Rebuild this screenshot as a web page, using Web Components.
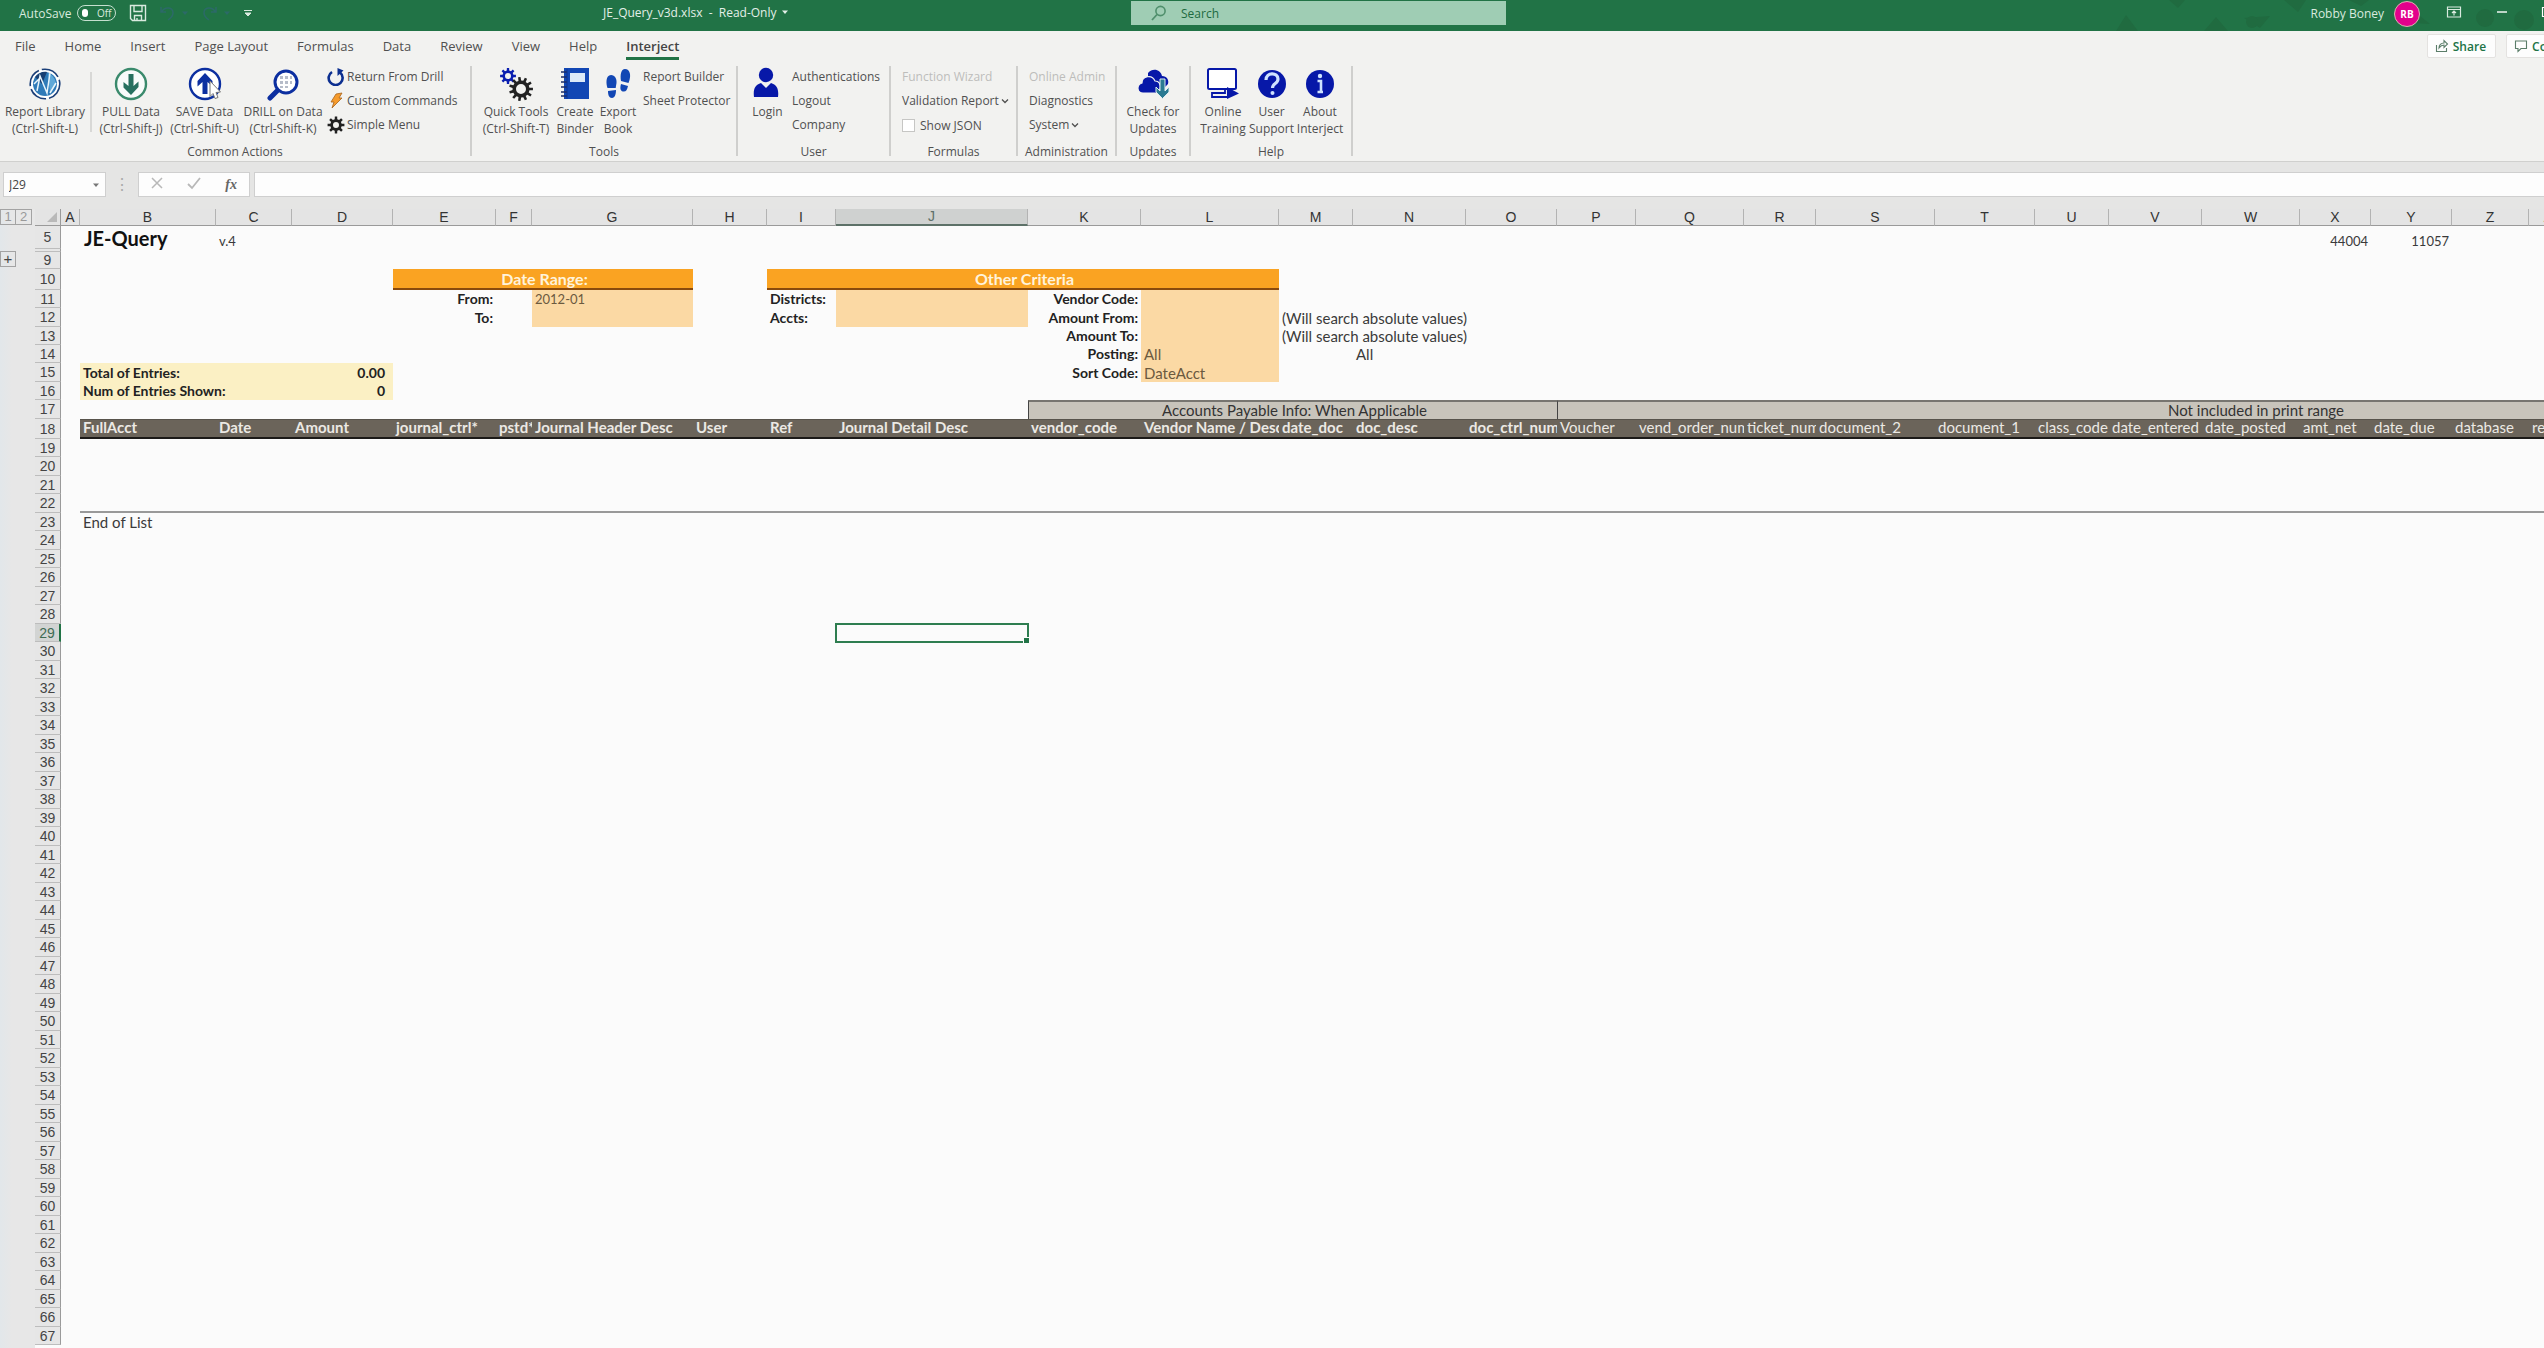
<!DOCTYPE html>
<html lang="en">
<head>
<meta charset="utf-8">
<title>JE_Query_v3d.xlsx - Read-Only</title>
<style>
  :root {
    --ui: "Open Sans", "Noto Sans", sans-serif;
    --head: "Liberation Sans", Arial, sans-serif;
    --cell: Lato, "Open Sans", sans-serif;
    --green: #217346;
    --ink: #505050;
  }
  html, body { margin: 0; height: 100%; overflow: hidden; background: #fbfbfb; }
  body { font-family: var(--ui); font-size: 12px; color: var(--ink); }
</style>
</head>
<body>
<workbook-app></workbook-app>
<script>
/* Outline of a gear wheel: n teeth between the outer and the inner radius, with a round hole. */
function gear(cx, cy, ro, ri, hole, n) {
  let d = '';
  const step = Math.PI * 2 / n;
  for (let i = 0; i < n; i++) {
    [[ri, -.28], [ro, -.18], [ro, .18], [ri, .28]].forEach(([r, k], j) => {
      const a = (i + k) * step;
      d += (i + j ? 'L' : 'M') + (cx + r * Math.cos(a)).toFixed(2) + ' ' + (cy + r * Math.sin(a)).toFixed(2);
    });
  }
  return d + `ZM${cx - hole} ${cy}a${hole} ${hole} 0 1 0 ${hole * 2} 0a${hole} ${hole} 0 1 0 ${-hole * 2} 0Z`;
}

const ICONS = {
  library: [34, `<circle cx="17" cy="17" r="14.8" fill="#fff" stroke="#1b3f78" stroke-width="1.6" stroke-dasharray="19 3"/><circle cx="17" cy="17" r="12" fill="#2f7ab8"/><path d="M7 10c3-4 8-6 12-5l-5 12z" fill="#173f73"/><path d="M20 6c5 2 8 7 8 12l-6 8z" fill="#5fa8d8"/><path d="M9 24l3-15 7 17 3-20M6 17l6-6M22 26l6-10" fill="none" stroke="#e8f4fb" stroke-width="1.5"/>`],
  pull: [34, `<circle cx="17" cy="17" r="15" fill="#f8fbfa" stroke="#3a8a6c" stroke-width="2.4"/><path d="M14.5 7h5v12l5-4.500v5.500L17 28l-7.500-7.500V15l5 4z" fill="#27705f"/>`],
  save: [34, `<circle cx="17" cy="17" r="15" fill="#fff" stroke="#0c2fa0" stroke-width="2.400"/><path d="M14.500 27h5V15l5 4.500V14L17 6l-7.500 8v5.500l5-4.500z" fill="#0c2fa0"/><path d="M22 14l10.500 11-4.500.5 2 5-3 1-2-5-3 3z" fill="#fff" stroke="#777" stroke-width="1"/>`],
  drill: [34, `<path d="M4 31l11-11" stroke="#0c2fa0" stroke-width="5" stroke-linecap="round"/><circle cx="20" cy="15" r="11" fill="#fff" stroke="#0c2fa0" stroke-width="3"/><path d="M14 9h3v3h-3zM19 9h3v3h-3zM24 9h2v3h-2zM14 14h3v3h-3zM19 14h3v3h-3zM24 14h2v3h-2zM14 19h3v2h-3zM19 19h3v2h-3z" fill="#b6bcc9"/>`],
  quick: [34, `<path fill-rule="evenodd" d="${gear(9, 9, 8, 5.6, 3, 8)}" fill="#0a1eb0"/><path fill-rule="evenodd" d="${gear(22, 22, 12, 8.5, 5, 11)}" fill="#222"/>`],
  binder: [34, `<path d="M6 1h25v31H6z" fill="#1247b4"/><path d="M12 6h15v9H12z" fill="#dceaf8"/><path d="M3 5h6M3 10h6M3 15h6M3 20h6M3 25h6M3 29h6" stroke="#1b2c66" stroke-width="1.500"/><path d="M9 2v30" stroke="#0d3590" stroke-width="1"/>`],
  steps: [34, `<path d="M10 8c4 0 6 4 5.500 8-.3 2-.5 3-.8 5H6.500C5 17 4.500 8 10 8zM7 24l8-1c0 4-1 8-4 8s-4-3-4-7zM24 2c5 0 6 6 4.500 11l-1 3-7.500-2c-1-6 0-12 4-12zM20 17l7 2c-1 4-2 6-5 5.500s-3-4-2-7.500z" fill="#1247b4"/>`],
  login: [34, `<circle cx="15" cy="8" r="7.200" fill="#0718a8"/><path d="M3 30c-1-8 1-12 7-14l5 5 5-5c6 2 8 6 7 14z" fill="#0718a8"/>`],
  cloud: [34, `<path d="M12 6c5-6 13-3 14 3 5 0 7 4 6 8l-3 3H12z" fill="#0718a8"/><path d="M7 26c-6 0-7-8-1-10 0-7 10-9 13-2 4 0 6 3 5 8l-2 4z" fill="#0718a8" stroke="#f1f1ef" stroke-width="1.200"/><path d="M24 12h5v12l4-4v5l-6.500 6.500L20 25v-5l4 4z" fill="#2a7a92" stroke="#dcebf0" stroke-width="1"/>`],
  training: [34, `<rect x="2" y="2" width="28" height="20" rx="1.500" fill="#fff" stroke="#0718a8" stroke-width="2"/><path d="M13 22h6v4H6v4h16" fill="none" stroke="#0718a8" stroke-width="1.800"/><path d="M21 20l12 6.500L21 32z" fill="#0718a8"/>`],
  support: [34, `<circle cx="17" cy="17" r="14" fill="#0718a8"/><path d="M11 13c0-8 12-8 12-1 0 5-5.500 4-5.500 9" fill="none" stroke="#cfe2ff" stroke-width="3.200"/><circle cx="17.500" cy="26" r="2" fill="#cfe2ff"/>`],
  about: [34, `<circle cx="17" cy="17" r="14" fill="#0718a8"/><circle cx="17" cy="9" r="2.200" fill="#cfe2ff"/><path d="M14.500 14h3.500v11h2M14.500 25h4" fill="none" stroke="#cfe2ff" stroke-width="2.600"/>`],
  undoDrill: [18, `<path d="M5 4A7 7 0 1 0 13 4.500" fill="none" stroke="#0c2f90" stroke-width="2.600"/><path d="M10.500 0v8l6-5.500z" fill="#0c2f90"/>`],
  bolt: [18, `<path d="M9 2l6-1-3 5h3L5 16l2-6H4z" fill="#f59b2c" stroke="#a8631a" stroke-width=".8"/>`],
  cog: [18, `<path fill-rule="evenodd" d="${gear(9, 9, 8.500, 5.800, 3, 8)}" fill="#222"/>`],
  chevron: [8, `<path d="M1 2.500l3 3 3-3" fill="none" stroke="#505050" stroke-width="1.300"/>`],
  disk: [18, `<path d="M1.500 1.500h15v15h-13l-2-2zM5 1.500v6h8v-6M5.500 16.500v-5h7v5M8 14v2" fill="none" stroke="#d9eadf" stroke-width="1.400"/>`],
  undo: [18, `<path d="M2 3v5h5M2.500 8C6 2 14 3 14 9c0 3-2 5-5 7" fill="none" stroke="#2c6a68" stroke-width="1.500"/>`],
  redo: [18, `<path d="M15 3v5h-5M14.500 8C11 2 3 3 3 9c0 3 2 5 5 7" fill="none" stroke="#2c6a68" stroke-width="1.500"/>`],
  more: [10, `<path d="M1 2.500h8M2 5l3 3 3-3z" fill="#d9eadf" stroke="#d9eadf" stroke-width="1"/>`],
  down: [8, `<path d="M1 2.500h6L4 6z" fill="currentColor"/>`],
  lens: [16, `<circle cx="9.500" cy="6" r="4.600" fill="none" stroke="#4f8f6c" stroke-width="1.600"/><path d="M6 9.500L1 15" stroke="#4f8f6c" stroke-width="1.800"/>`],
  panel: [16, `<path d="M1.500 3h13v10h-13zM1.500 5.500h13M8 11.500V7M6 9l2-2 2 2" fill="none" stroke="#d9eadf" stroke-width="1.200"/>`],
  minus: [12, `<path d="M1 6h10" stroke="#fff" stroke-width="1.400"/>`],
  box: [12, `<path d="M1.500 1.500h9v9h-9z" fill="none" stroke="#fff" stroke-width="1.200"/>`],
  share: [14, `<path d="M1.500 6v6.500h10V9M4 9c0-3 2-5 5-5V1.500L12.500 5 9 8.500V6C7 6 5.500 7 4 9z" fill="none" stroke="#5b7d69" stroke-width="1.100"/>`],
  comment: [14, `<path d="M1.500 2h11v7.500H7L4 12.500v-3H1.500z" fill="none" stroke="#5b7d69" stroke-width="1.100"/>`],
  cross: [12, `<path d="M1 1l10 10M11 1L1 11" stroke="#b8b8b8" stroke-width="1.500"/>`],
  tick: [14, `<path d="M1 8l4 4 8-10" fill="none" stroke="#b8b8b8" stroke-width="1.800"/>`],
  corner: [10, `<path d="M10 0v10H0z" fill="#b9b9b9"/>`],
};

class BaseElement extends HTMLElement {
  connectedCallback() {
    if (this.shadowRoot) return;
    this.attachShadow({ mode: 'open' }).innerHTML = `<style>
      *{box-sizing:border-box}
      button{font:inherit;color:inherit;background:none;border:0;padding:0;margin:0;cursor:pointer}
      ${this.css()}</style>${this.html()}`;
  }
  css() { return ''; }
  html() { return '<slot></slot>'; }
}

class AppIcon extends BaseElement {
  css() { return ':host{display:inline-flex;flex:none} svg{display:block}'; }
  html() {
    const [s, body] = ICONS[this.getAttribute('name')];
    return `<svg width="${s}" height="${s}" viewBox="0 0 ${s} ${s}" aria-hidden="true">${body}</svg>`;
  }
}

class TitleBar extends BaseElement {
  css() { return `
    :host{display:flex;position:relative;height:31px;background:var(--green);color:#d9eadf;overflow:hidden;font-size:12px}
    .decor{position:absolute;right:0;top:0}
    .quick{flex:none;display:flex;align-items:center;width:603px;height:26px;padding-left:19px}
    .auto{display:flex;align-items:center;gap:6px;margin-right:13px;font-size:12px;white-space:nowrap}
    .sw{display:flex;align-items:center;gap:9px;width:39px;height:16px;padding:0 4px;border:1px solid #c5dfcf;border-radius:8px;font-size:10px;line-height:14px}
    .sw i{width:8px;height:8px;border-radius:4px;background:#fff}
    .quick button{display:flex;align-items:center}
    .u{margin-left:12px;gap:4px;color:#2c6a68}
    .m{margin-left:12px}
    .file{flex:none;width:528px;height:24px;display:flex;align-items:center;gap:4px;color:#e3efe8}
    .find{flex:none;display:flex;align-items:center;gap:14px;width:375px;height:24px;margin-top:1px;padding-left:20px;background:#9fcdb4}
    .find input{flex:1;min-width:0;border:0;background:none;outline:0;padding:0;font:12px var(--ui);color:#1d6a40}
    .find input::placeholder{color:#1d6a40;opacity:1}
    .right{position:relative;margin-left:auto;display:flex;align-items:center;height:27px;white-space:nowrap}
    .who{margin-right:10px}
    .av{display:grid;place-items:center;width:26px;height:26px;margin-right:26px;border-radius:13px;background:#e3008c;border:1px solid #d9b6b0;color:#fff;font-size:10px;font-weight:700}
    .p{margin-right:34px}.n{margin-right:33px}.b{margin-right:-9px}`; }
  html() { return `
    <svg class="decor" width="480" height="31" viewBox="-80 0 480 31" aria-hidden="true"><g fill="#206b40"><path d="M25 0h16l-7 8zM-28 31l10-16 12 16zM60 31l12-14 12 14zM100 18l26-2-10 12zM140 0h22l-8 12zM250 22l26-6 10 8zM205 0h20l-8 6z"/><circle cx="341" cy="18" r="9"/><circle cx="380" cy="20" r="10"/><circle cx="108" cy="22" r="6"/></g></svg>
    <div class="quick">
      <label class="auto"><span>AutoSave</span><span class="sw"><i></i>Off</span></label>
      <button aria-label="Save"><app-icon name="disk"></app-icon></button>
      <button class="u" aria-label="Undo"><app-icon name="undo"></app-icon><app-icon name="down"></app-icon></button>
      <button class="u" aria-label="Redo"><app-icon name="redo"></app-icon><app-icon name="down"></app-icon></button>
      <button class="m" aria-label="Customize"><app-icon name="more"></app-icon></button>
    </div>
    <div class="file"><span>JE_Query_v3d.xlsx&nbsp; -&nbsp; Read-Only</span><app-icon name="down"></app-icon></div>
    <label class="find"><app-icon name="lens"></app-icon><input type="search" placeholder="Search" aria-label="Search"></label>
    <div class="right"><span class="who">Robby Boney</span><span class="av">RB</span>
      <button class="p" aria-label="Ribbon display options"><app-icon name="panel"></app-icon></button>
      <button class="n" aria-label="Minimize"><app-icon name="minus"></app-icon></button>
      <button class="b" aria-label="Restore"><app-icon name="box"></app-icon></button></div>`; }
}

class RibbonTabs extends BaseElement {
  css() { return `
    :host{display:flex;align-items:flex-start;height:35px;padding-left:15px;font-size:13px;overflow:hidden}
    nav{display:flex;gap:29px}
    nav button{height:29px;line-height:30px;border-bottom:3px solid transparent;white-space:nowrap}
    nav .on{border-color:var(--green);font-weight:600;color:#444}
    .act{display:flex;gap:10px;margin:3px -61px 0 auto}
    .act button{display:flex;align-items:center;gap:4px;height:24px;padding:0 9px 0 7px;background:#fdfdfd;border:1px solid #e4e2e0;border-radius:2px;color:var(--green);font-weight:600;font-size:12px}`; }
  html() {
    const tabs = ['File', 'Home', 'Insert', 'Page Layout', 'Formulas', 'Data', 'Review', 'View', 'Help', 'Interject'];
    return `<nav>${tabs.map(t => `<button${t === 'Interject' ? ' class="on"' : ''}>${t}</button>`).join('')}</nav>
      <div class="act"><button><app-icon name="share"></app-icon>Share</button><button><app-icon name="comment"></app-icon>Comments</button></div>`;
  }
}

class RibbonGroup extends BaseElement {
  css() { return `
    :host{display:flex;flex-direction:column;flex:none;width:var(--w);height:90px;border-right:2px solid #cfcfcd}
    .row{display:flex;flex:none;height:76px;padding-left:var(--pad,0)}
    .name{flex:none;height:20px;line-height:20px;text-align:center;font-size:12px}`; }
  html() { return `<div class="row"><slot></slot></div><div class="name">${this.getAttribute('label')}</div>`; }
}

class BigButton extends BaseElement {
  css() { return `
    :host{display:block;flex:none;width:var(--w)}
    button{display:flex;flex-direction:column;align-items:center;width:100%;padding-top:1px;line-height:17px;text-align:center;white-space:nowrap}
    .t{display:block;padding-top:2px}`; }
  html() { return `<button><app-icon name="${this.getAttribute('icon')}"></app-icon><span class="t"><slot></slot></span></button>`; }
}

class ButtonStack extends BaseElement {
  css() { return ':host{display:flex;flex-direction:column;flex:none;margin-left:3px}'; }
}

class SmallButton extends BaseElement {
  css() { return `
    :host{display:block;height:24px}
    :host([off]){color:#bdbdbb}
    button{display:flex;align-items:center;gap:2px;height:22px;line-height:22px;white-space:nowrap}`; }
  html() {
    const i = this.getAttribute('icon');
    return `<button${this.hasAttribute('off') ? ' disabled' : ''}>${i ? `<app-icon name="${i}"></app-icon>` : ''}<slot></slot>${this.hasAttribute('menu') ? '<app-icon name="chevron"></app-icon>' : ''}</button>`;
  }
}

class TickBox extends BaseElement {
  css() { return `
    :host{display:block;height:24px}
    label{display:flex;align-items:center;gap:5px;height:22px;white-space:nowrap}
    input{appearance:none;width:13px;height:13px;margin:0;background:#fff;border:1px solid #c6c6c4}`; }
  html() { return '<label><input type="checkbox"><slot></slot></label>'; }
}

class RibbonBar extends BaseElement {
  css() { return `
    :host{display:flex;height:95px;overflow:hidden}
    .sep{flex:none;width:2px;height:60px;margin:6px 3px 0 0;background:#d8d8d6}`; }
  html() { return `
    <ribbon-group label="Common Actions" style="--w:472px">
      <big-button icon="library" style="--w:90px">Report Library<br>(Ctrl-Shift-L)</big-button><span class="sep"></span>
      <big-button icon="pull" style="--w:72px">PULL Data<br>(Ctrl-Shift-J)</big-button>
      <big-button icon="save" style="--w:75px">SAVE Data<br>(Ctrl-Shift-U)</big-button>
      <big-button icon="drill" style="--w:82px">DRILL on Data<br>(Ctrl-Shift-K)</big-button>
      <button-stack><small-button icon="undoDrill">Return From Drill</small-button><small-button icon="bolt">Custom Commands</small-button><small-button icon="cog">Simple Menu</small-button></button-stack>
    </ribbon-group>
    <ribbon-group label="Tools" style="--w:266px;--pad:6px">
      <big-button icon="quick" style="--w:76px">Quick Tools<br>(Ctrl-Shift-T)</big-button>
      <big-button icon="binder" style="--w:42px">Create<br>Binder</big-button>
      <big-button icon="steps" style="--w:44px">Export<br>Book</big-button>
      <button-stack><small-button>Report Builder</small-button><small-button>Sheet Protector</small-button></button-stack>
    </ribbon-group>
    <ribbon-group label="User" style="--w:153px;--pad:8px">
      <big-button icon="login" style="--w:43px">Login</big-button>
      <button-stack><small-button>Authentications</small-button><small-button>Logout</small-button><small-button>Company</small-button></button-stack>
    </ribbon-group>
    <ribbon-group label="Formulas" style="--w:127px;--pad:8px">
      <button-stack><small-button off>Function Wizard</small-button><small-button menu>Validation Report</small-button><tick-box>Show JSON</tick-box></button-stack>
    </ribbon-group>
    <ribbon-group label="Administration" style="--w:99px;--pad:8px">
      <button-stack><small-button off>Online Admin</small-button><small-button>Diagnostics</small-button><small-button menu>System</small-button></button-stack>
    </ribbon-group>
    <ribbon-group label="Updates" style="--w:74px">
      <big-button icon="cloud" style="--w:72px">Check for<br>Updates</big-button>
    </ribbon-group>
    <ribbon-group label="Help" style="--w:162px;--pad:8px">
      <big-button icon="training" style="--w:48px">Online<br>Training</big-button>
      <big-button icon="support" style="--w:49px">User<br>Support</big-button>
      <big-button icon="about" style="--w:48px">About<br>Interject</big-button>
    </ribbon-group>`; }
}

class FormulaBar extends BaseElement {
  css() { return `
    :host{display:flex;height:48px;padding:10px 0 12px 3px;background:#e5e5e4;border-top:1px solid #d0d0ce}
    .name{display:flex;align-items:center;flex:none;width:103px;padding:0 5px;background:#fdfdfd;border:1px solid #cfcfcf;color:#777}
    input{border:0;background:none;outline:0;padding:0;min-width:0;flex:1;font:12px var(--ui);color:#444}
    .dots{flex:none;width:32px;text-align:center;line-height:24px;color:#aaa;font-size:16px}
    .fx{display:flex;align-items:center;justify-content:space-around;flex:none;width:112px;margin-right:4px;background:#fdfdfd;border:1px solid #cfcfcf}
    .fx b{font:italic 700 14px "Liberation Serif",serif;color:#666}
    .line{flex:1;padding:0 6px;background:#fdfdfd;border:1px solid #cfcfcf;border-right:0}`; }
  html() { return `
    <label class="name"><input value="J29" aria-label="Name box"><app-icon name="down"></app-icon></label>
    <span class="dots">⋮</span>
    <div class="fx"><button aria-label="Cancel"><app-icon name="cross"></app-icon></button><button aria-label="Enter"><app-icon name="tick"></app-icon></button><button aria-label="Insert function"><b>fx</b></button></div>
    <input class="line" aria-label="Formula">`; }
}

class OutlineGutter extends BaseElement {
  css() { return `
    :host{display:block;flex:none;width:35px;background:linear-gradient(90deg,#e2e7ea,#e7e7e7 12px)}
    .lv{display:flex}
    button{width:16px;height:16px;border:1px solid #a3a3a3;color:#999;font:13px/14px var(--head)}
    .lv button+button{border-left:0}
    .plus{display:block;margin-top:26px;color:#444;font-size:15px}`; }
  html() { return '<div class="lv"><button>1</button><button>2</button></div><button class="plus" aria-label="Expand rows">+</button>'; }
}

/* Column letters with their widths; the last one carries the rest of the merged header. */
const COLS = [['A', 19], ['B', 136], ['C', 76], ['D', 101], ['E', 103], ['F', 36], ['G', 161], ['H', 74], ['I', 69], ['J', 192], ['K', 113], ['L', 138], ['M', 74], ['N', 113], ['O', 91], ['P', 79], ['Q', 108], ['R', 72], ['S', 119], ['T', 100], ['U', 74], ['V', 93], ['W', 98], ['X', 71], ['Y', 81], ['Z', 77], ['AA', 49], ['', 373]];
const HEIGHTS = { 5: 23, 9: 17, 10: 21, 11: 18, 12: 19, 13: 18, 14: 18, 15: 19, 16: 18, 17: 19, 18: 20 };
/* row -> column -> [text, class, span] */
const CELLS = {
  5: { B: ['JE-Query', 'title'], C: ['v.4', 'num low'], X: ['44004', 'r num low'], Y: ['11057', 'r num low'] },
  10: { E: ['Date Range:', 'band', 3], I: ['Other Criteria', 'band', 4] },
  11: { E: ['From:', 'b r'], G: ['2012-01', 'in num'], I: ['Districts:', 'b'], J: ['', 'in'], K: ['Vendor Code:', 'b r'], L: ['', 'in'] },
  12: { E: ['To:', 'b r'], G: ['', 'in'], I: ['Accts:', 'b'], J: ['', 'in'], K: ['Amount From:', 'b r'], L: ['', 'in'], M: ['(Will search absolute values)', ''] },
  13: { K: ['Amount To:', 'b r'], L: ['', 'in'], M: ['(Will search absolute values)', ''] },
  14: { K: ['Posting:', 'b r'], L: ['All', 'in'], N: ['All', ''] },
  15: { B: ['Total of Entries:', 'b sum'], C: ['', 'sum'], D: ['0.00', 'b r sum n'], K: ['Sort Code:', 'b r'], L: ['DateAcct', 'in'] },
  16: { B: ['Num of Entries Shown:', 'b sum'], C: ['', 'sum'], D: ['0', 'b r sum n'] },
  17: { K: ['Accounts Payable Info: When Applicable', 'grp', 5], P: ['Not included in print range', 'grp', 13] },
  18: { B: ['FullAcct', 'h hb'], C: ['Date', 'h hb'], D: ['Amount', 'h hb'], E: ['journal_ctrl*', 'h hb'], F: ['pstd*', 'h hb'], G: ['Journal Header Desc', 'h hb'], H: ['User', 'h hb'], I: ['Ref', 'h hb'], J: ['Journal Detail Desc', 'h hb'], K: ['vendor_code', 'h hb'], L: ['Vendor Name / Desc', 'h hb'], M: ['date_doc', 'h hb'], N: ['doc_desc', 'h hb'], O: ['doc_ctrl_num', 'h hb'], P: ['Voucher', 'h'], Q: ['vend_order_num', 'h'], R: ['ticket_num', 'h'], S: ['document_2', 'h'], T: ['document_1', 'h'], U: ['class_code', 'h'], V: ['date_entered', 'h'], W: ['date_posted', 'h'], X: ['amt_net', 'h'], Y: ['date_due', 'h'], Z: ['database', 'h'], AA: ['re', 'h'], '': ['', 'h'] },
  23: { B: ['End of List', ''] },
};

class SheetGrid extends BaseElement {
  css() { return `
    :host{display:block;flex:1;min-width:0;overflow:hidden;background:#fbfbfb}
    table{table-layout:fixed;border-collapse:separate;border-spacing:0;width:${26 + COLS.reduce((s, c) => s + c[1], 0)}px;font:15px var(--cell);color:#3a3a3a}
    th,td{padding:0;white-space:nowrap;line-height:16px;vertical-align:middle}
    thead th{height:17px;background:#e4e4e4;border-right:1px solid #b3b3b3;border-bottom:1px solid #9a9a9a;font:14px/15px var(--head);color:#333}
    thead .cur{background:#cfd1d0;border-bottom:2px solid #5d7168;color:#5f7068}
    .corner{border-right-color:#9a9a9a}
    .corner div{display:flex;justify-content:flex-end;padding-right:3px}
    tbody th{background:#e6e6e6;border-right:1px solid #9a9a9a;border-bottom:1px solid #bdbdbd;font:14px/16px var(--head);color:#444}
    tbody th.cur{background:#d2d4d3;border-right:2px solid var(--green);color:#3f6b53}
    td{padding-left:3px;overflow:visible}
    .gap th{height:3px}.gap th,.gap td{line-height:0;font-size:0}
    .r{text-align:right;padding-right:3px}
    .n{padding-right:8px}
    .b{font-size:14px;font-weight:700;color:#222}
    .title{font-size:20px;line-height:22px;font-weight:700;color:#111;padding-left:4px}
    .num{font-size:13px}
    .low{vertical-align:bottom}
    .band{background:#faa322;border-bottom:2px solid #8a4a0c;color:#fff3dc;text-align:center;font-size:16px;font-weight:700}
    .in{background:#fbd9a4;color:#6b5a3f}
    .sum{background:#fbf0c4}
    .grp{background:#c8c4bb;border-top:2px solid #777570;border-left:1px solid #444;text-align:center;color:#333;line-height:14px;padding-bottom:1px}
    .h{background:#6b645a;color:#ece9e4;border-top:1px solid #57534b;border-bottom:2px solid #1c1a18;overflow:hidden;line-height:15px;padding-bottom:2px}
    .hb{font-weight:700}
    .rule{border-bottom:2px solid #999}
    .sel{position:relative}
    .sel i{position:absolute;inset:-1px;border:2px solid #2e7d50}
    .sel i::after{content:"";position:absolute;right:-3px;bottom:-3px;width:5px;height:5px;background:var(--green);border:1px solid #fbfbfb;box-sizing:content-box}`; }
  html() {
    const rows = [5, 'gap', 9];
    for (let n = 10; n <= 67; n++) rows.push(n);
    const body = rows.map(n => {
      if (n === 'gap') return `<tr class="gap"><th></th><td colspan="${COLS.length}"></td></tr>`;
      const h = HEIGHTS[n] || (n % 2 ? 18 : 19), data = CELLS[n] || {};
      let out = `<tr style="height:${h}px"><th scope="row"${n === 29 ? ' class="cur"' : ''}>${n}</th>`;
      for (let i = 0; i < COLS.length;) {
        const c = COLS[i][0], cell = data[c], span = cell && cell[2] || 1;
        let cls = cell ? cell[1] : '', inner = cell ? cell[0] : '';
        if (n === 22 && i > 0) cls = 'rule';
        if (n === 29 && c === 'J') { cls = 'sel'; inner = '<i></i>'; }
        out += `<td${cls ? ` class="${cls}"` : ''}${span > 1 ? ` colspan="${span}"` : ''}>${inner}</td>`;
        i += span;
      }
      return out + '</tr>';
    }).join('');
    return `<table><colgroup><col style="width:26px">${COLS.map(c => `<col style="width:${c[1]}px">`).join('')}</colgroup>
      <thead><tr><th class="corner"><div><app-icon name="corner"></app-icon></div></th>${COLS.map(c => `<th scope="col"${c[0] === 'J' ? ' class="cur"' : ''}>${c[0]}</th>`).join('')}</tr></thead>
      <tbody>${body}</tbody></table>`;
  }
}

class WorkbookApp extends BaseElement {
  css() { return `
    :host{display:flex;flex-direction:column;height:100vh;overflow:hidden}
    .ribbon{background:#f2f2f0}
    .sheet{display:flex;flex:1;min-height:0;overflow:hidden}`; }
  html() { return `<title-bar></title-bar><div class="ribbon"><ribbon-tabs></ribbon-tabs><ribbon-bar></ribbon-bar></div><formula-bar></formula-bar>
    <div class="sheet"><outline-gutter></outline-gutter><sheet-grid></sheet-grid></div>`; }
}

[['app-icon', AppIcon], ['title-bar', TitleBar], ['ribbon-tabs', RibbonTabs], ['ribbon-group', RibbonGroup], ['big-button', BigButton], ['button-stack', ButtonStack], ['small-button', SmallButton], ['tick-box', TickBox], ['ribbon-bar', RibbonBar], ['formula-bar', FormulaBar], ['outline-gutter', OutlineGutter], ['sheet-grid', SheetGrid], ['workbook-app', WorkbookApp]]
  .forEach(([name, cls]) => customElements.define(name, cls));
</script>
</body>
</html>
